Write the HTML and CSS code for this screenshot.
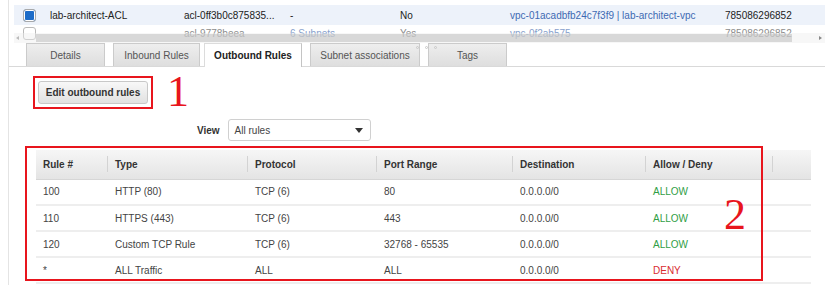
FILE: index.html
```html
<!doctype html>
<html lang="en">
  <head>
    <meta charset="UTF-8" />
    <meta name="viewport" content="width=device-width, initial-scale=1.0" />
    <title>Network ACLs - Outbound Rules</title>
    <link rel="stylesheet" href="styles.css">
  </head>
  <body>
    <div class="panel">
      <div class="list">
        <div class="row row-stub">
          <span><span class="check"></span></span>
        </div>
        <div class="row row-selected">
          <span><span class="check check-on"></span></span>
          <span>lab-architect-ACL</span>
          <span>acl-0ff3b0c875835...</span>
          <span>-</span>
          <span>No</span>
          <span class="link">vpc-01acadbfb24c7f3f9 | lab-architect-vpc</span>
          <span>785086296852</span>
        </div>
        <div class="row row-faded">
          <span><span class="check"></span></span>
          <span></span>
          <span>acl-9778beea</span>
          <span class="link">6 Subnets</span>
          <span>Yes</span>
          <span class="link">vpc-0f2ab575</span>
          <span>785086296852</span>
        </div>

        <!-- horizontal scrollbar lying over the second row -->
        <div class="hscroll">
          <span class="arrow arrow-left"></span>
          <span class="thumb"></span>
          <span class="arrow arrow-right"></span>
        </div>
      </div>

      <div class="tabs">
        <div class="tab tab-details">Details</div>
        <div class="tab tab-inbound">Inbound Rules</div>
        <div class="tab tab-outbound tab-active">Outbound Rules</div>
        <div class="tab tab-subnets">Subnet associations</div>
        <div class="tab tab-tags">Tags</div>
        <span class="grip"><i></i><i></i><i></i></span>
      </div>

      <div class="actions">
        <div class="mark-box">
          <button class="btn">Edit outbound rules</button>
        </div>
        <span class="mark-num mark-num-1">1</span>
      </div>

      <div class="view-row">
        <span class="view-label">View</span>
        <div class="select">
          <span>All rules</span>
          <span class="caret"></span>
        </div>
      </div>

      <div class="rules">
        <table>
          <thead>
            <tr>
              <th class="col-num">Rule #</th>
              <th class="col-type">Type</th>
              <th class="col-proto">Protocol</th>
              <th class="col-port">Port Range</th>
              <th class="col-dest">Destination</th>
              <th class="col-action">Allow / Deny</th>
              <th class="col-extra"></th>
            </tr>
          </thead>
          <tbody>
            <tr>
              <td>100</td>
              <td>HTTP (80)</td>
              <td>TCP (6)</td>
              <td>80</td>
              <td>0.0.0.0/0</td>
              <td class="allow">ALLOW</td>
              <td></td>
            </tr>
            <tr>
              <td>110</td>
              <td>HTTPS (443)</td>
              <td>TCP (6)</td>
              <td>443</td>
              <td>0.0.0.0/0</td>
              <td class="allow">ALLOW</td>
              <td></td>
            </tr>
            <tr>
              <td>120</td>
              <td>Custom TCP Rule</td>
              <td>TCP (6)</td>
              <td>32768 - 65535</td>
              <td>0.0.0.0/0</td>
              <td class="allow">ALLOW</td>
              <td></td>
            </tr>
            <tr>
              <td>*</td>
              <td>ALL Traffic</td>
              <td>ALL</td>
              <td>ALL</td>
              <td>0.0.0.0/0</td>
              <td class="deny">DENY</td>
              <td></td>
            </tr>
          </tbody>
        </table>

        <!-- annotation drawn over the table -->
        <div class="mark-frame"></div>
        <span class="mark-num mark-num-2">2</span>
      </div>
    </div>
  </body>
</html>
```

FILE: styles.css
```css
* {
  box-sizing: border-box;
}

body {
  margin: 0;
  font-family: "Liberation Sans", Arial, sans-serif;
  font-size: 10px;
  color: #444;
  background: #ffffff;
  overflow: hidden;
}

.panel {
  margin-left: 8px;
  border-left: 1px solid #e4e4e4;
  min-height: 285px;
}

/* ACL list */
.list {
  position: relative;
  height: 43px;
  margin-left: 5px;
  overflow: hidden;
}

.row {
  display: grid;
  grid-template-columns: 36px 134px 106px 110px 110px 215px 1fr;
  align-items: center;
  white-space: nowrap;
}

.row-stub {
  height: 22px;
  margin-top: -18px;
}

.row-selected {
  height: 20px;
  margin-top: 1px;
  background: #edf2fa;
  color: #222;
}

.row-selected .link {
  color: #3d6ab3;
}

.row-faded {
  height: 17px;
  color: #8c8c8c;
}

.row-faded .link {
  color: #86a0cc;
}

.check {
  display: block;
  width: 13px;
  height: 13px;
  margin-left: 9px;
  border: 1px solid #b9b9b9;
  border-radius: 3px;
  background: #fff;
}

.check-on {
  background: #1d6cc8;
  box-shadow: inset 0 0 0 1px #fff;
  border-color: #a9a9a9;
}

.hscroll {
  position: absolute;
  left: 0;
  right: 0;
  bottom: 0;
  height: 10px;
  background: rgba(238, 238, 238, 0.45);
}

.thumb {
  position: absolute;
  left: 22px;
  width: 756px;
  top: 1px;
  bottom: 1px;
  background: rgba(185, 185, 185, 0.5);
}

.arrow {
  position: absolute;
  top: 3px;
  width: 0;
  height: 0;
  border-top: 2px solid transparent;
  border-bottom: 2px solid transparent;
}

.arrow-left {
  left: 2px;
  border-right: 3px solid #bbb;
}

.arrow-right {
  left: 805px;
  border-left: 3px solid #888;
}

/* tabs */
.tabs {
  position: relative;
  display: flex;
  gap: 8px;
  height: 24px;
  padding-left: 17px;
  border-bottom: 1px solid #d9d9d9;
}

.tab {
  height: 23px;
  display: flex;
  align-items: center;
  justify-content: center;
  border: 1px solid #cbcbcb;
  border-bottom: 0;
  background: linear-gradient(#eeeeee, #dedede);
  color: #555;
  white-space: nowrap;
}

.tab-details { width: 79px; }
.tab-inbound { width: 87px; }
.tab-outbound { width: 98px; }
.tab-subnets { width: 110px; }
.tab-tags { width: 79px; }

.tab-active {
  height: 24px;
  margin-left: -4px;
  background: #fff;
  border-color: #dcdcdc;
  border-right-color: #c4c4c4;
  font-weight: bold;
  color: #222;
}

/* resize grip sitting on the tab edges */
.grip {
  position: absolute;
  left: 407px;
  top: 3px;
  display: flex;
  gap: 6px;
}

.grip i {
  width: 3px;
  height: 3px;
  border: 1px solid #c8c8c8;
  border-radius: 50%;
}

/* edit button row */
.actions {
  display: flex;
  align-items: flex-start;
  padding: 9px 0 0 24px;
}

.mark-box {
  border: 2px solid #e8151d;
  padding: 3px;
}

.btn {
  display: block;
  width: 110px;
  height: 23px;
  padding: 0;
  border: 1px solid #c8c8c8;
  border-radius: 3px;
  background: linear-gradient(#f8f8f8, #e1e1e1);
  font-family: "Liberation Sans", Arial, sans-serif;
  font-size: 10px;
  font-weight: bold;
  color: #333;
}

.mark-num {
  font-family: "Liberation Serif", "Times New Roman", serif;
  font-size: 44px;
  color: #e8151d;
}

.mark-num-1 {
  line-height: 33px;
  margin: -1px 0 0 14px;
}

/* view filter */
.view-row {
  display: flex;
  align-items: center;
  gap: 8px;
  margin: 10px 0 0 188px;
}

.view-label {
  font-weight: bold;
  color: #333;
}

.select {
  width: 143px;
  height: 22px;
  display: flex;
  align-items: center;
  justify-content: space-between;
  padding: 0 7px 0 6px;
  border: 1px solid #d0d0d0;
  border-radius: 3px;
  color: #444;
}

.caret {
  width: 0;
  height: 0;
  border-left: 4px solid transparent;
  border-right: 4px solid transparent;
  border-top: 5px solid #333;
}

/* rules table */
.rules {
  position: relative;
  width: 775px;
  margin: 9px 0 0 27px;
}

table {
  width: 100%;
  border-collapse: collapse;
  table-layout: fixed;
}

thead tr {
  background: linear-gradient(#f6f6f6, #e4e4e4);
}

th {
  height: 29px;
  padding: 0 0 0 8px;
  text-align: left;
  font-weight: bold;
  color: #333;
  border-bottom: 1px solid #d6d6d6;
}

th + th {
  background: linear-gradient(#d3d3d3, #d3d3d3) 0 50% / 1px 16px no-repeat;
}

th.col-num {
  padding-left: 7px;
}

.col-num { width: 71px; }
.col-type { width: 140px; }
.col-proto { width: 129px; }
.col-port { width: 136px; }
.col-dest { width: 133px; }
.col-action { width: 127px; }

td {
  height: 26px;
  padding: 0 0 0 8px;
  border-bottom: 2px solid #eeeeee;
  white-space: nowrap;
}

td:first-child {
  padding-left: 7px;
}

.allow {
  color: #2f9e45;
}

.deny {
  color: #d92b2f;
}

.mark-frame {
  position: absolute;
  left: -11px;
  top: -4px;
  width: 738px;
  height: 135px;
  border: 2px solid #e8151d;
  pointer-events: none;
}

.mark-num-2 {
  position: absolute;
  left: 688px;
  top: 43px;
  line-height: 1;
}
```
